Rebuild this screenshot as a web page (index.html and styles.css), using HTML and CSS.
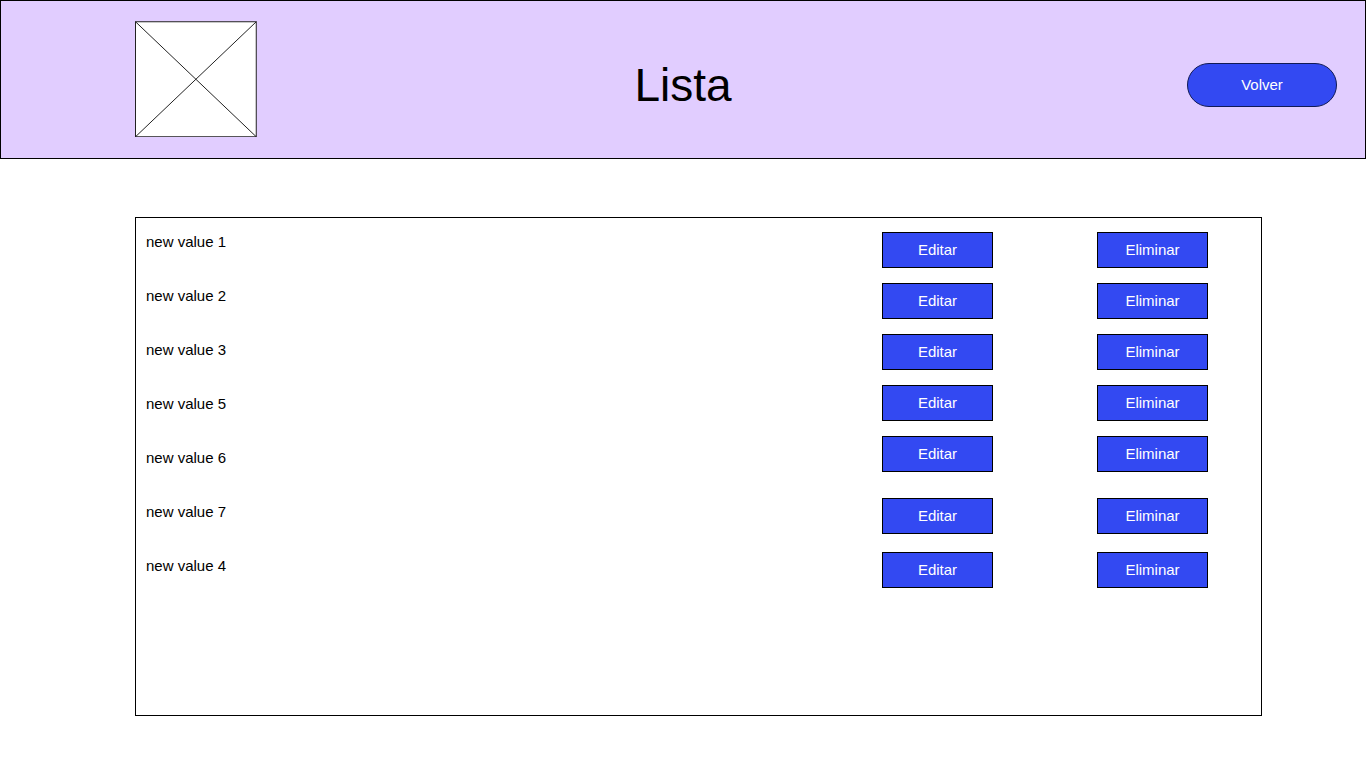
FILE: index.html
```html
<!DOCTYPE html>
<html lang="es">
<head>
  <meta charset="utf-8">
  <meta name="viewport" content="width=device-width, initial-scale=1">
  <title>Lista</title>
  <link rel="stylesheet" href="styles.css">
</head>
<body>
  <header class="header">
    <svg class="logo" width="122" height="116" viewBox="0 0 122 116" role="img" aria-label="Logo">
      <rect x="0.5" y="0.75" width="120.75" height="115" fill="#fff" stroke="#222" stroke-width="1"/>
      <path d="M0.5 0.75L121.25 115.75M121.25 0.75L0.5 115.75" fill="none" stroke="#222" stroke-width="1"/>
    </svg>
    <h1 class="title">Lista</h1>
    <button class="button button-back" type="button">Volver</button>
  </header>

  <main class="panel">
    <ul class="values">
      <li>new value 1</li>
      <li>new value 2</li>
      <li>new value 3</li>
      <li>new value 5</li>
      <li>new value 6</li>
      <li>new value 7</li>
      <li>new value 4</li>
    </ul>
    <div class="actions">
      <div class="group">
        <div class="pair"><button class="button" type="button">Editar</button><button class="button" type="button">Eliminar</button></div>
        <div class="pair"><button class="button" type="button">Editar</button><button class="button" type="button">Eliminar</button></div>
        <div class="pair"><button class="button" type="button">Editar</button><button class="button" type="button">Eliminar</button></div>
        <div class="pair"><button class="button" type="button">Editar</button><button class="button" type="button">Eliminar</button></div>
        <div class="pair"><button class="button" type="button">Editar</button><button class="button" type="button">Eliminar</button></div>
      </div>
      <div class="group group-wide">
        <div class="pair"><button class="button" type="button">Editar</button><button class="button" type="button">Eliminar</button></div>
        <div class="pair"><button class="button" type="button">Editar</button><button class="button" type="button">Eliminar</button></div>
      </div>
    </div>
  </main>
</body>
</html>
```
FILE: styles.css
```css
* {
  box-sizing: border-box;
}

body {
  margin: 0;
  background: #fff;
  color: #000;
  font: 15px/20px "Liberation Sans", Arial, sans-serif;
}

.header {
  display: grid;
  grid-template-columns: 1fr auto 1fr;
  align-items: center;
  padding: 20px 0 21px;
  border: 1px solid #000;
  background: #e1cdff;
}

.logo {
  display: block;
  margin-left: 134px;
}

.title {
  margin: 11px 0 0;
  font-size: 46px;
  font-weight: 400;
  line-height: 52px;
}

.button {
  width: 111px;
  height: 36px;
  padding: 0;
  border: 1px solid #000;
  border-radius: 0;
  background: #3349f2;
  color: #fff;
  font: inherit;
  cursor: pointer;
}

.button-back {
  justify-self: end;
  width: 150px;
  height: 44px;
  margin: 11px 28px 0 0;
  border-color: #111a55;
  border-radius: 22px;
}

.panel {
  display: flex;
  justify-content: space-between;
  align-items: flex-start;
  min-height: 499px;
  margin: 58px 104px 52px 135px;
  padding: 14px 53px 14px 10px;
  border: 1px solid #000;
}

.values {
  display: grid;
  gap: 34px;
  margin: 0;
  padding: 0;
  list-style: none;
}

.actions {
  display: grid;
  gap: 26px;
}

.group {
  display: grid;
  gap: 15px;
}

.group-wide {
  gap: 18px;
}

.pair {
  display: flex;
  gap: 104px;
}
```
